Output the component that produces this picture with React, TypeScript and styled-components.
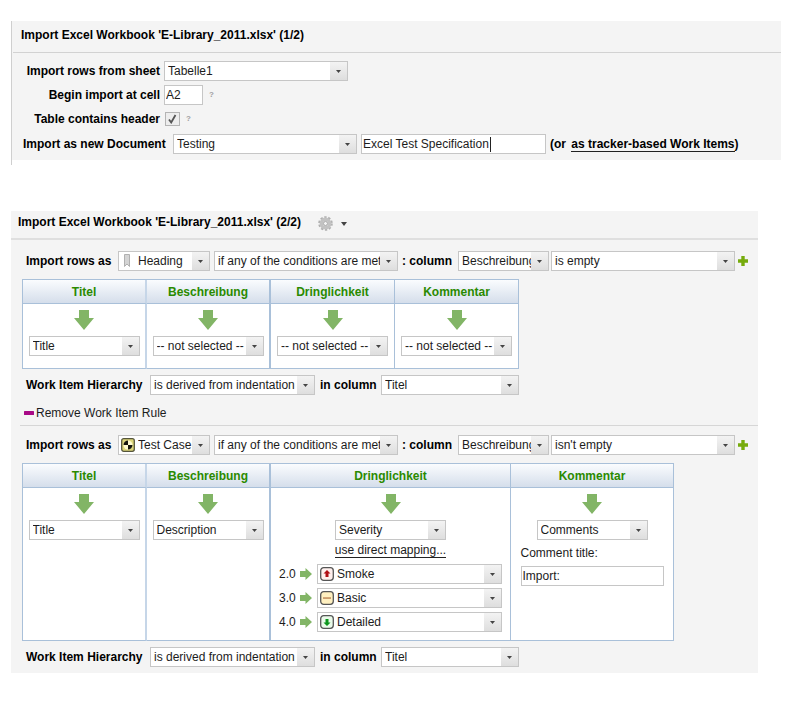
import React, { useId } from "react";
import styled, { createGlobalStyle, css } from "styled-components";

const GlobalStyle = createGlobalStyle`
  *, *::before, *::after { box-sizing: border-box; }
  body {
    margin: 0;
    background: #fff;
    color: #1c1c1c;
    font: 12px/16px "Liberation Sans", Arial, sans-serif;
  }
`;

const Page = styled.main`
  display: flex;
  flex-direction: column;
  padding: 21px 31px 30px 11px;
`;

const SheetPanel = styled.section`
  border-left: 1px solid #cfcfcf;
  padding-bottom: 5px;
  margin-bottom: 46px;
`;

const SheetBody = styled.div`
  background: #f4f4f4;
  padding: 0 0 1px 1px;
`;

const SheetTitle = styled.h2`
  margin: 0;
  height: 32px;
  padding: 6px 0 0 8px;
  border-bottom: 1px solid #d2d2d2;
  color: #000;
  font-size: 12px;
  line-height: 16px;
`;

const SheetForm = styled.form`
  display: flex;
  flex-direction: column;
  padding: 8px 10px 0;
`;

const FormRow = styled.div<{ $height: number }>`
  display: flex;
  align-items: center;
  height: ${(p) => p.$height}px;
`;

const Label = styled.label<{ $width?: number; $end?: boolean }>`
  flex: none;
  color: #000;
  font-weight: bold;
  white-space: nowrap;
  ${(p) => p.$width && css`width: ${p.$width}px;`}
  text-align: ${(p) => (p.$end ? "right" : "left")};
`;

const fieldStyle = css`
  height: 20px;
  margin: 0;
  border: 1px solid #c6c6c6;
  border-radius: 0;
  background: #fff;
  color: #1c1c1c;
  font: 12px/16px "Liberation Sans", Arial, sans-serif;
  outline: none;
`;

const TextInput = styled.input<{ $width: number }>`
  ${fieldStyle}
  width: ${(p) => p.$width}px;
  padding: 0 1px;
`;

const FieldWithCaret = styled.span`
  position: relative;
  display: flex;
  margin: 0 4px;
`;

const Caret = styled.span`
  position: absolute;
  top: 3px;
  left: 129px;
  width: 1px;
  height: 15px;
  background: #222;
`;

const SelectFrame = styled.span<{ $width: number }>`
  position: relative;
  display: inline-flex;
  flex: none;
  width: ${(p) => p.$width}px;
`;

const NativeSelect = styled.select<{ $indent: number }>`
  ${fieldStyle}
  appearance: none;
  width: 100%;
  padding: 0 0 0 ${(p) => p.$indent}px;
  text-align: left;
`;

const DropHandle = styled.span`
  position: absolute;
  top: 1px;
  right: 1px;
  bottom: 1px;
  width: 17px;
  display: flex;
  align-items: center;
  justify-content: center;
  background: linear-gradient(#f3f3f3, #dedede);
  pointer-events: none;
`;

const SelectIcon = styled.span`
  position: absolute;
  top: 3px;
  left: 3px;
  display: flex;
  pointer-events: none;
`;

const Help = styled.button`
  border: 0;
  padding: 0;
  margin-left: 6px;
  background: none;
  color: #a0a0a0;
  font: bold 8px/10px "Liberation Sans", Arial, sans-serif;
`;

const CheckBox = styled.input`
  appearance: none;
  width: 15px;
  height: 14px;
  margin: 0 0 0 1px;
  border: 1px solid #b4b4b4;
  background: #ededed;
`;

const CheckFrame = styled.span`
  position: relative;
  display: flex;
`;

const CheckMark = styled.svg`
  position: absolute;
  top: 2px;
  left: 3px;
  pointer-events: none;
`;

const Note = styled.span`
  color: #000;
  font-weight: bold;
  white-space: nowrap;
`;

const NoteLink = styled.a`
  margin-left: 2px;
  color: #000;
  text-decoration: none;
  border-bottom: 1px solid #222;
  line-height: 13px;
  display: inline-block;
`;

const MappingPanel = styled.section`
  margin-right: 23px;
  padding-bottom: 4px;
  background: #f4f4f4;
`;

const MappingHeader = styled.header`
  display: flex;
  align-items: flex-start;
  height: 29px;
  padding: 3px 0 0 7px;
  border-bottom: 2px solid #dfdfdf;
`;

const MappingTitle = styled.h2`
  min-width: 290px;
  margin: 0 10px 0 0;
  color: #000;
  font-size: 12px;
  line-height: 16px;
`;

const GearButton = styled.button`
  display: flex;
  align-items: center;
  gap: 8px;
  padding: 2px 0 0;
  border: 0;
  background: none;
`;

const Rule = styled.div<{ $divided?: boolean }>`
  margin-left: 9px;
  padding: 9px 0 0 2px;
  ${(p) => p.$divided && css`
    padding-top: 7px;
    border-top: 1px solid #d6d6d6;
  `}
`;

const RuleRow = styled.div`
  display: flex;
  align-items: center;
  height: 24px;
  padding-left: 4px;
`;

const IconButton = styled.button`
  display: flex;
  flex: none;
  margin-left: 3px;
  padding: 0;
  border: 0;
  background: none;
`;

const RemoveButton = styled.button`
  display: flex;
  align-items: center;
  gap: 2px;
  height: 24px;
  margin-top: 4px;
  padding: 0 2px;
  border: 0;
  background: none;
  color: #1c1c1c;
  font: 12px/16px "Liberation Sans", Arial, sans-serif;
`;

const MapTable = styled.table`
  margin: 6px 0 4px;
  border-collapse: separate;
  border-spacing: 0;
  border: solid #a9c0d9;
  border-width: 1px 0 0 1px;
  background: #fff;
`;

const cellEdges = css`
  border: solid #a9c0d9;
  border-width: 0 1px 1px 0;
  &:nth-child(1) { border-right: 2px solid #c6d6e8; }
  &:nth-child(2) { border-right: 2px solid #a9c0d9; }
`;

const MapHead = styled.th<{ $width: number }>`
  ${cellEdges}
  width: ${(p) => p.$width}px;
  height: 24px;
  padding: 0;
  background: linear-gradient(#fafcfe, #d5deeb);
  color: #2a8a00;
  font-size: 12px;
  line-height: 16px;
`;

const MapCell = styled.td<{ $height: number }>`
  ${cellEdges}
  height: ${(p) => p.$height}px;
  padding: 6px 0 0;
  vertical-align: top;
`;

const CellStack = styled.div`
  display: flex;
  flex-direction: column;
  align-items: center;
`;

const DownArrow = styled.svg`
  margin-bottom: 6px;
`;

const DirectLink = styled.a`
  margin: 4px 0;
  color: #1c1c1c;
  line-height: 13px;
  text-decoration: none;
  border-bottom: 1px solid #222;
`;

const ValueRow = styled.label`
  display: grid;
  grid-template-columns: 21px 17px 185px;
  align-items: center;
  height: 24px;
`;

const CommentField = styled.label`
  display: flex;
  flex-direction: column;
  gap: 5px;
  margin-top: 5px;
`;

const Triangle = ({ size = 5 }: { size?: number }) => (
  <svg width={size} height={size - 2} viewBox="0 0 5 3" preserveAspectRatio="none" aria-hidden="true">
    <path d="M0 0h5L2.500 3z" fill="#444" />
  </svg>
);

const BookmarkIcon = () => (
  <svg width="14" height="14" viewBox="0 0 14 14" aria-hidden="true">
    <path d="M3.500.5h5v12L6 10l-2.500 2.500z" fill="#d4d4d4" stroke="#b0b0b0" />
  </svg>
);

const TestCaseIcon = () => (
  <svg width="14" height="14" viewBox="0 0 14 14" aria-hidden="true">
    <rect x=".7" y=".7" width="12.600" height="12.600" rx="2" fill="#ddd67a" stroke="#55553c" strokeWidth="1.300" />
    <circle cx="7" cy="7" r="4.500" fill="#fffbd0" />
    <path d="M7 7V2.500A4.500 4.500 0 0 0 2.500 7zM7 7h4.500A4.500 4.500 0 0 1 7 11.500z" fill="#16160c" />
  </svg>
);

type Level = "up" | "flat" | "down";
const levelFill: Record<Level, string> = { up: "#fff0ee", flat: "#fff0c0", down: "#eafaea" };

const LevelIcon = ({ level }: { level: Level }) => (
  <svg width="14" height="14" viewBox="0 0 14 14" aria-hidden="true">
    <rect x=".7" y=".7" width="12.600" height="12.600" rx="3" fill={levelFill[level]} stroke="#555" strokeWidth="1.300" />
    {level === "up" && <path d="M7 3l3.500 3.500H8.500V10h-3V6.500H3.500z" fill="#b00f16" />}
    {level === "flat" && <path d="M3 6.300h8v1.500H3z" fill="#c08a5a" />}
    {level === "down" && <path d="M7 11l3.500-3.500H8.500V4h-3v3.500H3.500z" fill="#0b961c" />}
  </svg>
);

const GearIcon = () => (
  <svg width="15" height="15" viewBox="0 0 15 15" aria-hidden="true">
    <circle cx="7.500" cy="7.500" r="6.300" fill="none" stroke="#b0b0b0" strokeWidth="2" strokeDasharray="2.300 1.660" />
    <circle cx="7.500" cy="7.500" r="4.200" fill="#ececec" stroke="#c2c2c2" strokeWidth="3.400" />
    <circle cx="7.500" cy="7.500" r="2" fill="#f4f4f4" stroke="#a8a8a8" />
  </svg>
);

const PlusIcon = () => (
  <svg width="10" height="10" viewBox="0 0 10 10" aria-hidden="true">
    <path d="M3.300 0h3.400v3.300H10v3.400H6.700V10H3.300V6.700H0V3.300h3.300z" fill="#76ab0c" />
  </svg>
);

const MinusIcon = () => (
  <svg width="10" height="4" viewBox="0 0 10 4" aria-hidden="true">
    <rect width="10" height="4" rx=".5" fill="#a80a86" />
  </svg>
);

const ArrowDown = () => (
  <DownArrow width="20" height="20" viewBox="0 0 20 20" aria-hidden="true">
    <path d="M5 0h10v8h5L10 20 0 8h5z" fill="#82b566" />
  </DownArrow>
);

const ArrowRight = () => (
  <svg width="12" height="12" viewBox="0 0 12 12" aria-hidden="true">
    <path d="M0 3h5.500V0L12 6l-6.500 6V9H0z" fill="#82b566" />
  </svg>
);

interface SelectProps {
  value: string;
  width: number;
  id?: string;
  label?: string;
  icon?: React.ReactNode;
  indent?: number;
}

const Select = ({ value, width, id, label, icon, indent = 3 }: SelectProps) => (
  <SelectFrame $width={width}>
    <NativeSelect id={id} aria-label={label} $indent={indent} defaultValue={value}>
      <option>{value}</option>
    </NativeSelect>
    {icon && <SelectIcon>{icon}</SelectIcon>}
    <DropHandle><Triangle /></DropHandle>
  </SelectFrame>
);

const Spacer = styled.span<{ $width: number }>`
  flex: none;
  width: ${(p) => p.$width}px;
`;

const ConditionRow = ({ kind, icon, test }: { kind: string; icon: React.ReactNode; test: string }) => {
  const id = useId();
  return (
    <RuleRow>
      <Label htmlFor={id} $width={92}>Import rows as</Label>
      <Select id={id} value={kind} width={92} icon={icon} indent={19} />
      <Spacer $width={4} />
      <Select label="Condition mode" value="if any of the conditions are met" width={184} />
      <Spacer $width={4} />
      <Label htmlFor={id + "column"} $width={56}>: column</Label>
      <Select id={id + "column"} value="Beschreibung" width={91} />
      <Spacer $width={2} />
      <Select label="Condition" value={test} width={184} />
      <IconButton type="button" aria-label="Add condition"><PlusIcon /></IconButton>
    </RuleRow>
  );
};

const HierarchyRow = () => {
  const id = useId();
  return (
    <RuleRow>
      <Label htmlFor={id} $width={124}>Work Item Hierarchy</Label>
      <Select id={id} value="is derived from indentation" width={165} />
      <Spacer $width={5} />
      <Label htmlFor={id + "column"} $width={61}>in column</Label>
      <Select id={id + "column"} value="Titel" width={138} />
    </RuleRow>
  );
};

interface Column {
  name: string;
  field: string;
  width: number;
  extra?: React.ReactNode;
}

const Mapping = ({ columns, height }: { columns: Column[]; height: number }) => (
  <MapTable>
    <thead>
      <tr>
        {columns.map((c) => <MapHead key={c.name} $width={c.width} scope="col">{c.name}</MapHead>)}
      </tr>
    </thead>
    <tbody>
      <tr>
        {columns.map((c) => (
          <MapCell key={c.name} $height={height}>
            <CellStack>
              <ArrowDown />
              <Select label={c.name} value={c.field} width={111} />
              {c.extra}
            </CellStack>
          </MapCell>
        ))}
      </tr>
    </tbody>
  </MapTable>
);

const levels: { code: string; name: string; level: Level }[] = [
  { code: "2.0", name: "Smoke", level: "up" },
  { code: "3.0", name: "Basic", level: "flat" },
  { code: "4.0", name: "Detailed", level: "down" },
];

const unset = "-- not selected --";

const headingColumns: Column[] = [
  { name: "Titel", field: "Title", width: 124 },
  { name: "Beschreibung", field: unset, width: 124 },
  { name: "Dringlichkeit", field: unset, width: 124 },
  { name: "Kommentar", field: unset, width: 124 },
];

const testColumns: Column[] = [
  { name: "Titel", field: "Title", width: 124 },
  { name: "Beschreibung", field: "Description", width: 124 },
  {
    name: "Dringlichkeit",
    field: "Severity",
    width: 240,
    extra: (
      <>
        <DirectLink href="#direct">use direct mapping...</DirectLink>
        {levels.map((l) => (
          <ValueRow key={l.code}>
            {l.code}
            <ArrowRight />
            <Select value={l.name} width={185} icon={<LevelIcon level={l.level} />} indent={19} />
          </ValueRow>
        ))}
      </>
    ),
  },
  {
    name: "Kommentar",
    field: "Comments",
    width: 163,
    extra: (
      <CommentField>
        Comment title:
        <TextInput $width={143} defaultValue="Import:" />
      </CommentField>
    ),
  },
];

export default function App() {
  return (
    <>
      <GlobalStyle />
      <Page>
        <SheetPanel>
          <SheetBody>
            <SheetTitle>Import Excel Workbook 'E-Library_2011.xlsx' (1/2)</SheetTitle>
            <SheetForm>
              <FormRow $height={20}>
                <Label htmlFor="sheet" $width={137} $end>Import rows from sheet</Label>
                <Spacer $width={4} />
                <Select id="sheet" value="Tabelle1" width={184} />
              </FormRow>
              <FormRow $height={28}>
                <Label htmlFor="cell" $width={137} $end>Begin import at cell</Label>
                <Spacer $width={4} />
                <TextInput id="cell" $width={39} defaultValue="A2" />
                <Help type="button" aria-label="Help on start cell">?</Help>
              </FormRow>
              <FormRow $height={20}>
                <Label htmlFor="header" $width={137} $end>Table contains header</Label>
                <Spacer $width={4} />
                <CheckFrame>
                  <CheckBox id="header" type="checkbox" defaultChecked />
                  <CheckMark width="10" height="10" viewBox="0 0 10 10" aria-hidden="true">
                    <path d="M2 5.500l2.200 3L8.500 1" fill="none" stroke="#555" strokeWidth="1.800" />
                  </CheckMark>
                </CheckFrame>
                <Help type="button" aria-label="Help on header">?</Help>
              </FormRow>
              <FormRow $height={30}>
                <Label htmlFor="document" $width={150}>Import as new Document</Label>
                <Select id="document" value="Testing" width={184} />
                <FieldWithCaret>
                  <TextInput aria-label="Document name" $width={185} defaultValue="Excel Test Specification" />
                  <Caret />
                </FieldWithCaret>
                <Note>(or <NoteLink href="#tracker">as tracker-based Work Items</NoteLink>)</Note>
              </FormRow>
            </SheetForm>
          </SheetBody>
        </SheetPanel>

        <MappingPanel>
          <MappingHeader>
            <MappingTitle>Import Excel Workbook 'E-Library_2011.xlsx' (2/2)</MappingTitle>
            <GearButton type="button" aria-label="Import settings">
              <GearIcon />
              <Triangle size={6} />
            </GearButton>
          </MappingHeader>
          <Rule>
            <ConditionRow kind="Heading" icon={<BookmarkIcon />} test="is empty" />
            <Mapping columns={headingColumns} height={65} />
            <HierarchyRow />
            <RemoveButton type="button"><MinusIcon />Remove Work Item Rule</RemoveButton>
          </Rule>
          <Rule $divided>
            <ConditionRow kind="Test Case" icon={<TestCaseIcon />} test="isn't empty" />
            <Mapping columns={testColumns} height={153} />
            <HierarchyRow />
          </Rule>
        </MappingPanel>
      </Page>
    </>
  );
}
